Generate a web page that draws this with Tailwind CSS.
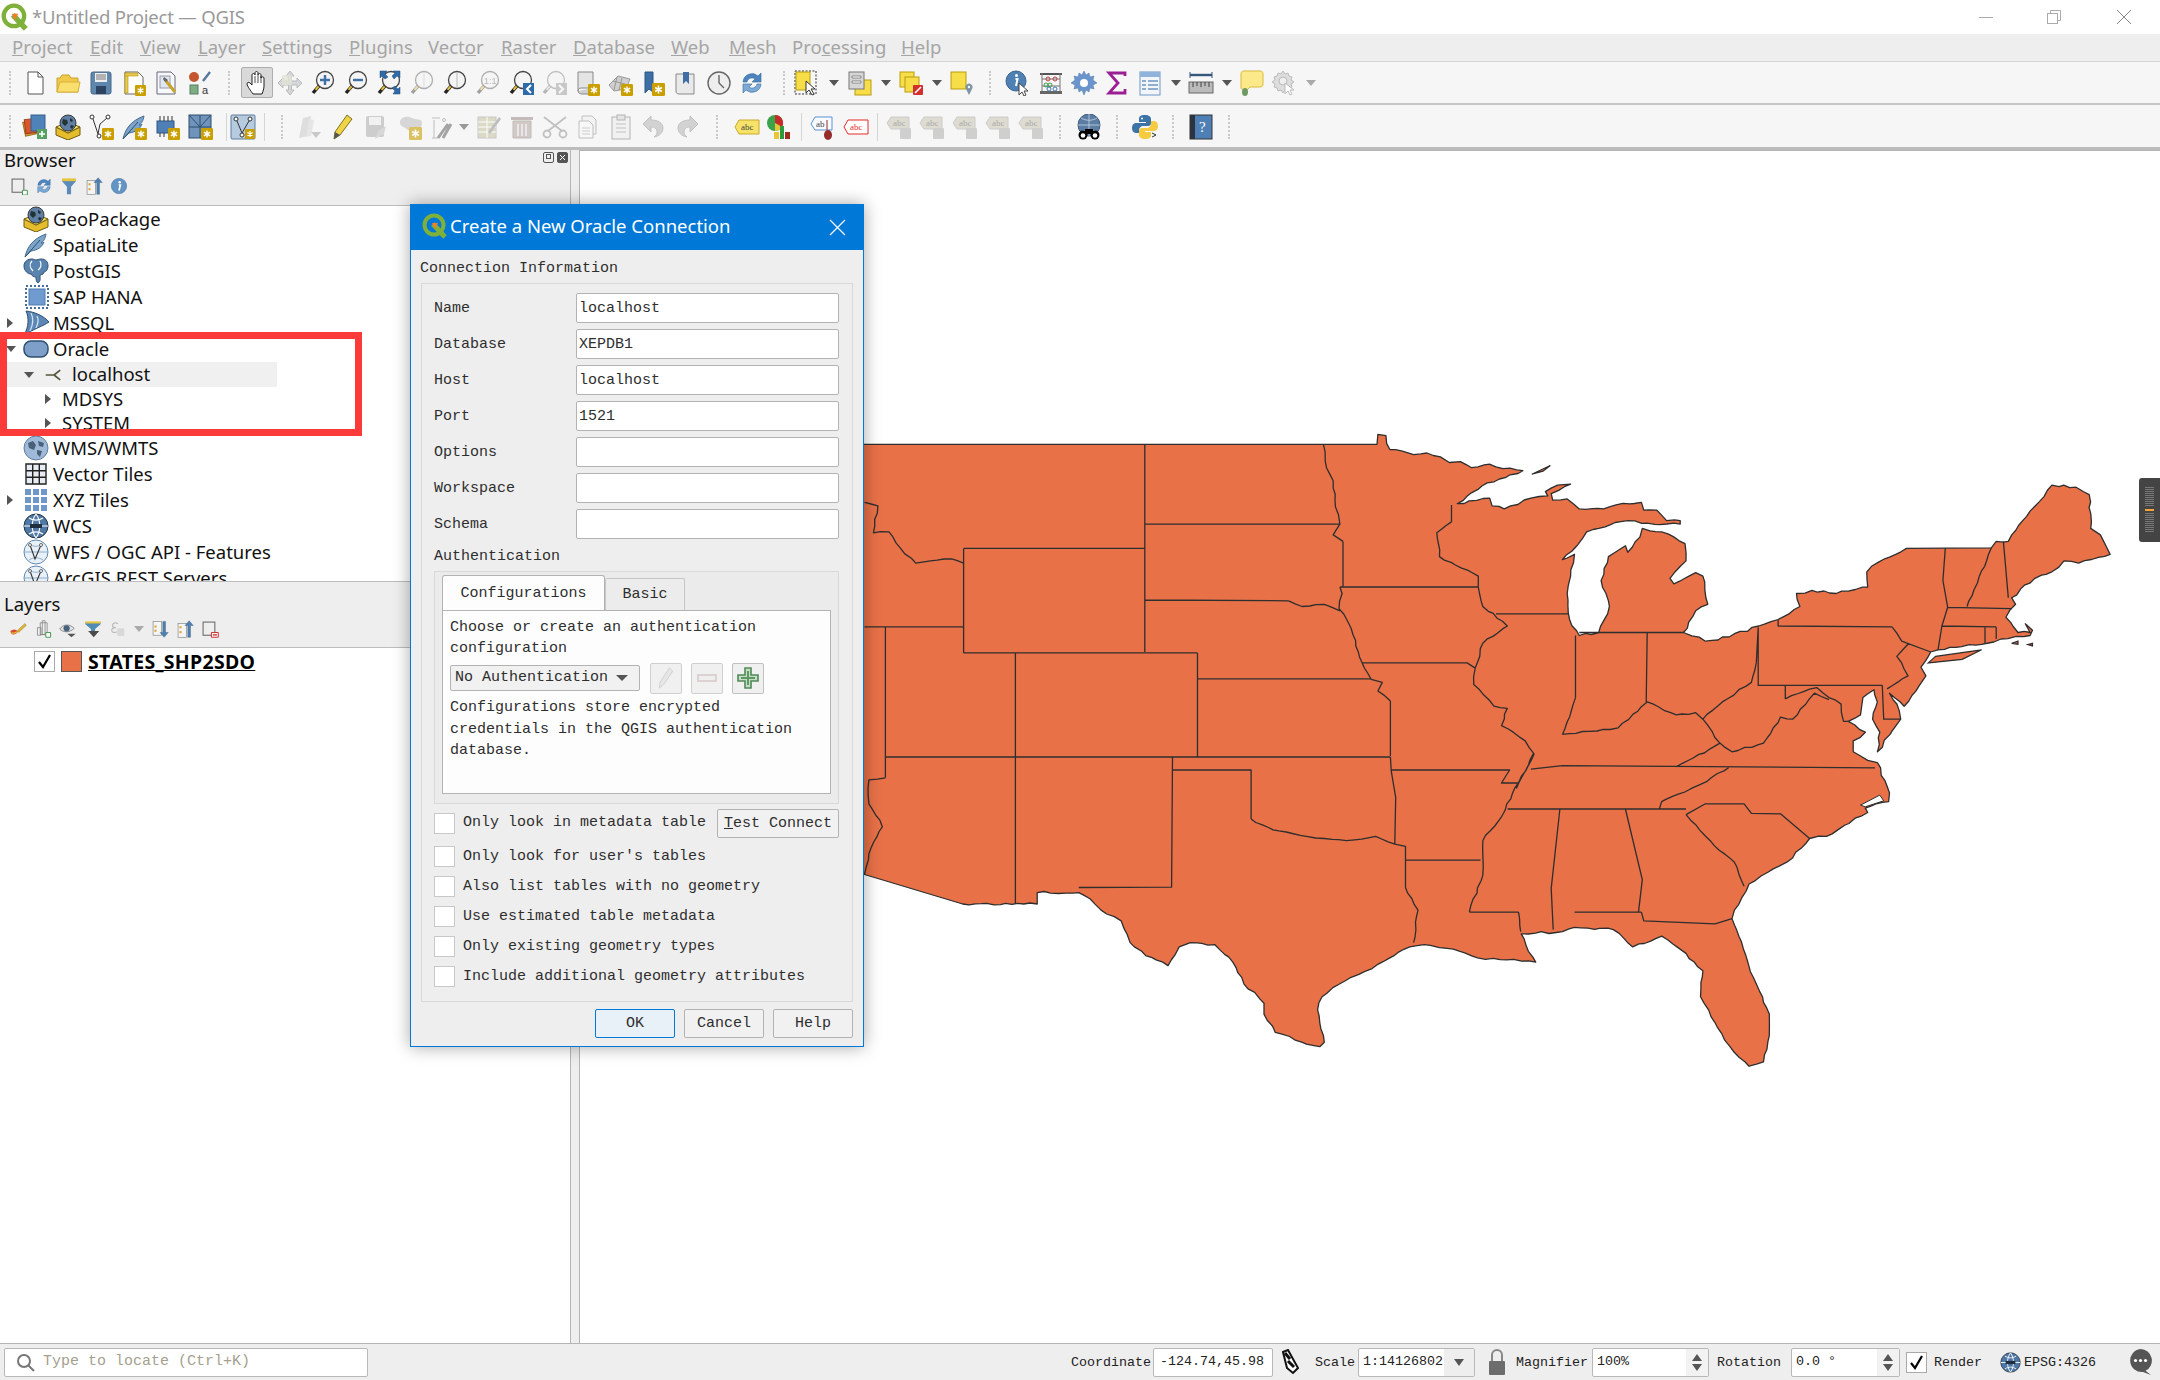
<!DOCTYPE html>
<html lang="en">
<head>
<meta charset="UTF-8" />
<title>QGIS - Create a New Oracle Connection</title>
<script src="https://cdn.jsdelivr.net/npm/@tailwindcss/browser@4"></script>
</head>
<body class="bg-white font-['Noto_Sans',sans-serif]">
<!-- icon sheet -->
<svg class="absolute w-0 h-0" aria-hidden="true">
  <symbol id="badge" viewBox="0 0 10 10"><rect width="10" height="10" rx="1" fill="#c9a000"/><path d="M5 2v6M2.4 3.5l5.2 3M2.4 6.5l5.2-3" stroke="#fff" stroke-width="1.2"/></symbol>
  <symbol id="mag" viewBox="0 0 26 26"><circle cx="15" cy="10" r="8.5" fill="#f4f4f4" stroke="#444" stroke-width="1.3"/><path d="M9 16l-6 7" stroke="#222" stroke-width="3.4"/><path d="M8.6 16.4l-3 3.4" stroke="#e8c23a" stroke-width="2"/></symbol>
  <symbol id="new" viewBox="0 0 26 26"><path d="M6 2h10l5 5v17H6z" fill="#fff" stroke="#555"/><path d="M16 2v5h5" fill="none" stroke="#555"/></symbol>
  <symbol id="open" viewBox="0 0 26 26"><path d="M2 8h3l2-3h7l2 3h7v14H2z" fill="#f1c94a" stroke="#c9a22c"/><path d="M2 22l3-10h20l-2 10z" fill="#fbdf6e" stroke="#d6b03a"/></symbol>
  <symbol id="save" viewBox="0 0 26 26"><rect x="3" y="2" width="20" height="22" rx="2" fill="#5f86ad" stroke="#49688a"/><rect x="7" y="3" width="12" height="9" fill="#eee"/><path d="M8 5h10M8 7h10M8 9h10" stroke="#777"/><rect x="8" y="16" width="10" height="8" fill="#2d4460"/></symbol>
  <symbol id="layout" viewBox="0 0 26 26"><path d="M4 2h13l5 5v17H4z" fill="#fff" stroke="#666"/><rect x="4" y="3" width="3" height="20" fill="#e9c94a" stroke="#b59412" stroke-width=".6"/><rect x="4" y="3" width="13" height="3" fill="#e9c94a" stroke="#b59412" stroke-width=".6"/><use href="#badge" x="14" y="15" width="11" height="11"/></symbol>
  <symbol id="layoutm" viewBox="0 0 26 26"><path d="M3 2h14l4 4v18H3z" fill="#f6f8fc" stroke="#667"/><rect x="6" y="6" width="10" height="12" fill="#dfe7f3" stroke="#99a"/><path d="M12 11l9 11" stroke="#c8a32a" stroke-width="3"/><path d="M10 7a3 3 0 0 0 2 5l2-2z" fill="#666"/></symbol>
  <symbol id="style" viewBox="0 0 26 26"><circle cx="7" cy="7" r="5" fill="#c4552f"/><rect x="3" y="15" width="8" height="9" fill="#7fae85" stroke="#5a7d60"/><path d="M16 11l7-9" stroke="#5577a0" stroke-width="2.4"/></symbol>
  <symbol id="hand" viewBox="0 0 26 26"><path d="M9 24c-2-3-6-8-6-10s2-2 3-1l2 2V5c0-2 3-2 3 0V3c0-2 3-2 3 0v2c0-2 3-2 3 0v3c0-1.500 3-1.500 3 0v8c0 3-1 5-2 8z" fill="#fff" stroke="#222"/><path d="M11 6v7M14 5v8M17 6v7" stroke="#222" stroke-width=".8"/></symbol>
  <symbol id="pansel" viewBox="0 0 26 26"><path d="M13 1l4 5h-2.500v5H20V8l5 5-5 5v-3h-5.500v5H17l-4 5-4-5h2.500v-5H6v3l-5-5 5-5v3h5.500V6H9z" fill="#d3d6da" stroke="#bbb"/><rect x="5" y="5" width="10" height="10" fill="#e3e3d5" opacity=".8"/></symbol>
  <symbol id="zoomin" viewBox="0 0 26 26"><use href="#mag" width="26" height="26"/><path d="M15 5v10M10 10h10" stroke="#3f6fa5" stroke-width="2.400"/></symbol>
  <symbol id="zoomout" viewBox="0 0 26 26"><use href="#mag" width="26" height="26"/><path d="M10 10h10" stroke="#3f6fa5" stroke-width="2.400"/></symbol>
  <symbol id="zoomfull" viewBox="0 0 26 26"><use href="#mag" width="26" height="26"/><path d="M4 1h7l-2 3 3 3-3 2-3-3-2 2zM24 1v7l-3-2-3 3-2-3 3-3-2-2zM24 24h-7l2-3-3-3 3-2 3 3 2-2z" fill="#2f6aa8" stroke="#274f7a" stroke-width=".5"/></symbol>
  <symbol id="zoomlayer" viewBox="0 0 26 26"><use href="#mag" width="26" height="26"/><path d="M15 2v16" stroke="#bbb"/></symbol>
  <symbol id="zoomlast" viewBox="0 0 26 26"><use href="#mag" width="26" height="26"/><rect x="15" y="13" width="11" height="12" fill="#2f6aa8"/><path d="M23 15l-4 4 4 4" fill="none" stroke="#fff" stroke-width="2"/></symbol>
  <symbol id="zoomnext" viewBox="0 0 26 26"><use href="#mag" width="26" height="26"/><rect x="15" y="13" width="11" height="12" fill="#2f6aa8"/><path d="M18 15l4 4-4 4" fill="none" stroke="#fff" stroke-width="2"/></symbol>
  <symbol id="bookscroll" viewBox="0 0 26 26"><path d="M4 2h15v16H7c-2 0-3 2-3 3z" fill="#e4e4e4" stroke="#888"/><path d="M4 21c0 2 2 3 4 3h11v-6" fill="#cfcfcf" stroke="#888"/><use href="#badge" x="14" y="14" width="12" height="12"/></symbol>
  <symbol id="mapbadge" viewBox="0 0 26 26"><path d="M2 15l9-9 12 3-4 10-12 2z" fill="#cfcfcf" stroke="#999"/><path d="M6 11l12 3M10 7l-3 13M15 8l-3 12" stroke="#999"/><use href="#badge" x="14" y="14" width="12" height="12"/></symbol>
  <symbol id="bookmark" viewBox="0 0 26 26"><path d="M5 2h8v20l-4-3-4 4z" fill="#3d6fa6" stroke="#2c5480"/><use href="#badge" x="12" y="13" width="13" height="13"/></symbol>
  <symbol id="bookmark2" viewBox="0 0 26 26"><path d="M3 4h18v20H6c-2 0-3-1-3-3z" fill="#e9e9e9" stroke="#888"/><path d="M10 2h6v12l-3-3-3 3z" fill="#3d6fa6"/></symbol>
  <symbol id="clock" viewBox="0 0 26 26"><circle cx="13" cy="13" r="11" fill="#eee" stroke="#666" stroke-width="1.400"/><path d="M13 5v8l5 5" fill="none" stroke="#666" stroke-width="1.400"/></symbol>
  <symbol id="refresh" viewBox="0 0 26 26"><path d="M4 12a9 9 0 0 1 15-6l3-3v9h-9l3-3a5 5 0 0 0-8 3z" fill="#4d86bf" stroke="#35689c" stroke-width=".6"/><path d="M22 14a9 9 0 0 1-15 6l-3 3v-9h9l-3 3a5 5 0 0 0 8-3z" fill="#7caad6" stroke="#35689c" stroke-width=".6"/></symbol>
  <symbol id="select" viewBox="0 0 26 26"><rect x="1" y="1" width="21" height="23" fill="none" stroke="#333" stroke-dasharray="2 1.500"/><rect x="2" y="2" width="14" height="18" fill="#f7dd47" stroke="#b99d10"/><path d="M12 11v12l3-3 3 5 2-1-3-5h4z" fill="#fff" stroke="#333"/></symbol>
  <symbol id="selform" viewBox="0 0 26 26"><rect x="8" y="10" width="16" height="15" fill="#f7dd47" stroke="#b99d10"/><rect x="2" y="2" width="15" height="17" fill="#d6d6d6" stroke="#777"/><path d="M5 7h9M5 12h9" stroke="#fff" stroke-width="2"/><path d="M5 6h9v2H5zM5 11h9v2H5z" fill="none" stroke="#666" stroke-width=".7"/></symbol>
  <symbol id="deselect" viewBox="0 0 26 26"><rect x="2" y="2" width="14" height="15" fill="#f7dd47" stroke="#b99d10"/><rect x="7" y="7" width="14" height="15" fill="#f7dd47" stroke="#b99d10"/><rect x="15" y="15" width="10" height="10" rx="1" fill="#d32f2f"/><path d="M17 23l6-6" stroke="#fff" stroke-width="1.600"/></symbol>
  <symbol id="selpin" viewBox="0 0 26 26"><rect x="2" y="2" width="15" height="17" fill="#f7dd47" stroke="#b99d10"/><path d="M20 25l-3-6a3.500 3.500 0 1 1 6 0z" fill="#7d95a5"/><circle cx="20" cy="17" r="1.200" fill="#fff"/></symbol>
  <symbol id="identify" viewBox="0 0 26 26"><circle cx="11" cy="11" r="10" fill="#4f80b4" stroke="#3b648f"/><circle cx="11.500" cy="5.500" r="1.500" fill="#fff"/><path d="M10.500 9h2l-1.500 7" fill="none" stroke="#fff" stroke-width="2"/><path d="M14 13v12l3-3 2 4 2-1-2-4h4z" fill="#fff" stroke="#444"/></symbol>
  <symbol id="abacus" viewBox="0 0 26 26"><rect x="2" y="3" width="22" height="2" fill="#555"/><rect x="2" y="21" width="22" height="3" fill="#666"/><path d="M4 3v18M22 3v18M4 9h18M4 16h18" stroke="#777"/><circle cx="10" cy="9" r="2" fill="none" stroke="#c43c3c"/><circle cx="17" cy="9" r="2" fill="none" stroke="#c43c3c"/><circle cx="8" cy="15" r="2" fill="none" stroke="#3c9a4c"/><circle cx="12" cy="15" r="2" fill="none" stroke="#3c9a4c"/><circle cx="11" cy="19" r="2" fill="none" stroke="#3c76b4"/><circle cx="17" cy="19" r="2" fill="none" stroke="#3c76b4"/></symbol>
  <symbol id="gear" viewBox="0 0 26 26"><path d="M13 1l2 4 3-2 1 4 4-1-1 4 4 3-4 2 1 4-4-1-1 4-3-2-2 5-2-5-3 2-1-4-4 1 1-4-4-2 4-3-1-4 4 1 1-4 3 2z" fill="#6a95cc" stroke="#5078a8" stroke-width=".5"/><circle cx="13" cy="13" r="4" fill="#fff"/></symbol>
  <symbol id="sigma" viewBox="0 0 26 26"><path d="M21 6V3H5l9 10-9 10h16v-4" fill="none" stroke="#9b1f94" stroke-width="2.800"/></symbol>
  <symbol id="table" viewBox="0 0 26 26"><rect x="3" y="2" width="20" height="23" fill="#f2f6fb" stroke="#6c95c4"/><rect x="3" y="2" width="20" height="5" fill="#8fb3da"/><path d="M5 11h4M11 11h10M5 15h4M11 15h10M5 19h4M11 19h10" stroke="#6c95c4" stroke-width="1.600"/></symbol>
  <symbol id="ruler" viewBox="0 0 26 26"><path d="M2 5h22" stroke="#34557c" stroke-width="2.400"/><path d="M2 2v6M24 2v6" stroke="#34557c"/><rect x="1" y="12" width="24" height="11" fill="#bbb" stroke="#666"/><path d="M5 12v5M9 12v4M13 12v5M17 12v4M21 12v5" stroke="#444"/></symbol>
  <symbol id="tip" viewBox="0 0 26 26"><path d="M5 1h16c2 0 3 1 3 3v10c0 2-1 3-3 3H11l-3 3H5c-2 0-3-1-3-3V4c0-2 1-3 3-3z" fill="#fbe98a" stroke="#d9b93c"/><ellipse cx="6" cy="22" rx="3" ry="4" fill="#6f9a62"/></symbol>
  <symbol id="action" viewBox="0 0 26 26"><path d="M11 1l2 3 3-1 1 3 3 1-1 3 3 2-3 2 1 3-3 1-1 3-3-1-2 3-2-3-3 1-1-3-3-1 1-3-3-2 3-2-1-3 3-1 1-3 3 1z" fill="#ddd" stroke="#bbb"/><circle cx="11" cy="11" r="4" fill="#eee" stroke="#bbb"/><path d="M13 13v11l3-3 2 4 2-1-2-4h4z" fill="#fff" stroke="#bbb"/></symbol>
  <symbol id="dsm" viewBox="0 0 26 26"><rect x="2" y="7" width="13" height="14" fill="#d8a13a" stroke="#9a6f1b" transform="rotate(-12 8 14)"/><rect x="3" y="5" width="13" height="14" fill="#d9562b" stroke="#a23c19" transform="rotate(-6 9 12)"/><rect x="9" y="1" width="14" height="16" fill="#4f82b8" stroke="#365f8b"/><rect x="15" y="15" width="10" height="10" fill="#59a064"/><path d="M20 17v6M17 20h6" stroke="#fff" stroke-width="1.600"/></symbol>
  <symbol id="gpkg" viewBox="0 0 26 26"><path d="M1 13l12 6 12-6v8l-12 5-12-5z" fill="#e5bd2c" stroke="#6d5b14"/><path d="M1 13l12-5 12 5-12 6z" fill="#f7dd62" stroke="#6d5b14"/><circle cx="13" cy="9" r="8" fill="#5f7fa6" stroke="#3a3a3a"/><path d="M8 5l4 1 1 3-3 3-3-3zM15 4l3 2-1 2-2-1zM16 11l3 1-2 3-2-2z" fill="#233"/></symbol>
  <symbol id="newvec" viewBox="0 0 26 26"><circle cx="4" cy="3" r="2" fill="#fff" stroke="#333"/><circle cx="20" cy="3" r="2" fill="#fff" stroke="#333"/><circle cx="11" cy="22" r="2" fill="#fff" stroke="#333"/><path d="M5 5l5 15 2-10 7-6" fill="none" stroke="#333"/><use href="#badge" x="14" y="14" width="12" height="12"/></symbol>
  <symbol id="feather" viewBox="0 0 26 26"><path d="M2 25c2-9 7-18 21-23-1 5-2 7-5 9 1 0 2 0 3-1-2 5-6 8-13 9z" fill="#7da4c9" stroke="#436b93"/><path d="M2 25L17 8" stroke="#2f506f"/></symbol>
  <symbol id="featherb" viewBox="0 0 26 26"><use href="#feather" width="26" height="26"/><use href="#badge" x="14" y="14" width="12" height="12"/></symbol>
  <symbol id="chip" viewBox="0 0 26 26"><rect x="3" y="7" width="17" height="12" fill="#4f7fb5" stroke="#2f5884"/><path d="M6 2v5M10 2v5M14 2v5M18 2v5M6 19v4M10 19v4" stroke="#333"/><use href="#badge" x="14" y="14" width="12" height="12"/></symbol>
  <symbol id="meshb" viewBox="0 0 26 26"><rect x="2" y="1" width="22" height="23" fill="#6f93bb" stroke="#2f4d6f"/><path d="M2 13h22M13 1v23M2 1l11 12M13 13L24 1" stroke="#2f4d6f"/><use href="#badge" x="14" y="14" width="12" height="12"/></symbol>
  <symbol id="vedit" viewBox="0 0 26 26"><rect x="1" y="1" width="24" height="24" rx="1" fill="#b7cbe0" stroke="#5f7f9f"/><circle cx="6" cy="5" r="2" fill="#fff" stroke="#333"/><circle cx="20" cy="5" r="2" fill="#fff" stroke="#333"/><circle cx="12" cy="21" r="2" fill="#fff" stroke="#333"/><path d="M7 7l5 12 7-12" fill="none" stroke="#333"/><use href="#badge" x="15" y="15" width="10" height="10"/></symbol>
  <symbol id="pencils" viewBox="0 0 26 26"><path d="M2 24L6 4l8-2-3 20z" fill="#bbb"/><path d="M9 23l3-18 5 1-3 16z" fill="#ccc"/><path d="M14 18h10l-5 6z" fill="#888"/></symbol>
  <symbol id="pencil" viewBox="0 0 26 26"><path d="M4 25l1-7L17 1l5 4-12 16z" fill="#f0d445" stroke="#7b7120"/><path d="M4 25l1-7 5 3z" fill="#555"/></symbol>
  <symbol id="savee" viewBox="0 0 26 26"><rect x="3" y="2" width="18" height="21" rx="2" fill="#a5a5a5"/><rect x="6" y="3" width="12" height="8" fill="#eee"/><path d="M12 25l3-8 8-5-2 8z" fill="#bbb"/></symbol>
  <symbol id="blobb" viewBox="0 0 26 26"><path d="M2 7c2-5 8-5 12-3s10 0 10 5-5 8-8 9-7-3-9-4-6-3-5-7z" fill="#c2c2c2"/><use href="#badge" x="11" y="13" width="13" height="13"/></symbol>
  <symbol id="vtools" viewBox="0 0 26 26"><path d="M3 4h8M5 6v18M3 24h6" stroke="#888" fill="none"/><path d="M9 24l10-14M22 10l-8 14" stroke="#555" stroke-width="3"/><circle cx="15" cy="6" r="1.500" fill="none" stroke="#888"/></symbol>
  <symbol id="tedit" viewBox="0 0 26 26"><rect x="2" y="3" width="18" height="21" fill="#c9c9a8" stroke="#aaa"/><path d="M2 8h18M2 13h18M2 18h18M11 3v21" stroke="#fff"/><path d="M12 18L23 3l2 2-11 15z" fill="#999"/></symbol>
  <symbol id="trash" viewBox="0 0 26 26"><rect x="2" y="3" width="22" height="3" fill="#a79595"/><path d="M4 7h18v17H4z" fill="#bcaaaa" stroke="#998"/><path d="M9 10v12M13 10v12M17 10v12" stroke="#eee" stroke-width="1.500"/></symbol>
  <symbol id="cut" viewBox="0 0 26 26"><path d="M2 3l18 14M24 3L6 17" stroke="#aaa" stroke-width="1.800"/><circle cx="5" cy="20" r="3.500" fill="none" stroke="#aaa" stroke-width="1.800"/><circle cx="21" cy="20" r="3.500" fill="none" stroke="#aaa" stroke-width="1.800"/></symbol>
  <symbol id="copy" viewBox="0 0 26 26"><path d="M7 2h10l4 4v14H7z" fill="#f2f2f2" stroke="#aaa"/><path d="M4 7h10l4 4v13H4z" fill="#f8f8f8" stroke="#aaa"/><path d="M7 14h8M7 17h8M7 20h8" stroke="#bbb"/></symbol>
  <symbol id="paste" viewBox="0 0 26 26"><rect x="4" y="3" width="18" height="22" fill="#f0f0f0" stroke="#999"/><rect x="9" y="1" width="8" height="5" fill="#ddd" stroke="#999"/><path d="M8 10h10M8 14h10M8 18h10" stroke="#aaa"/></symbol>
  <symbol id="undo" viewBox="0 0 26 26"><path d="M10 2L2 10l8 8v-5c4 0 6 2 6 5 0 2-1 3-3 5 6-1 9-5 9-9 0-5-5-8-12-8z" fill="#c4c4c4" stroke="#aaa"/></symbol>
  <symbol id="redo" viewBox="0 0 26 26"><path d="M16 2l8 8-8 8v-5c-4 0-6 2-6 5 0 2 1 3 3 5-6-1-9-5-9-9 0-5 5-8 12-8z" fill="#c4c4c4" stroke="#aaa"/></symbol>
  <symbol id="tag" viewBox="0 0 26 26"><path d="M5 6h20v14H5l-4-7z" fill="#f7e36a" stroke="#c9a92a"/></symbol>
  <symbol id="diagram" viewBox="0 0 26 26"><circle cx="8" cy="9" r="8" fill="#3aa34a"/><path d="M8 9V1a8 8 0 0 1 7 12z" fill="#c82a2a"/><path d="M8 9l7 4a8 8 0 0 1-7 4z" fill="#e8c636"/><rect x="7" y="18" width="5" height="7" fill="#e8c636"/><rect x="13" y="12" width="4" height="13" fill="#2d9a3e"/><rect x="18" y="18" width="5" height="7" fill="#a02a20"/></symbol>
  <symbol id="tagpin" viewBox="0 0 26 26"><path d="M5 3h17v13H5l-4-6z" fill="#f7fbff" stroke="#5c93cf"/><path d="M17 6v10" stroke="#9a2b2b"/><ellipse cx="18" cy="21" rx="4" ry="5" fill="#962b2b"/></symbol>
  <symbol id="tagred" viewBox="0 0 26 26"><path d="M5 6h20v14H5l-4-7z" fill="#fff" stroke="#e62b2b"/></symbol>
  <symbol id="taggray" viewBox="0 0 26 26"><path d="M5 3h18v12H5l-4-6z" fill="#dedbd0" stroke="#ccc"/><rect x="14" y="14" width="11" height="11" rx="1" fill="#cfcfcf"/></symbol>
  <symbol id="globebin" viewBox="0 0 26 26"><circle cx="13" cy="11" r="11" fill="#5c7da3" stroke="#3d5b7c"/><path d="M2 11h22M13 0v22M5 4c5 3 11 3 16 0M5 18c5-3 11-3 16 0" stroke="#c8d4e2" fill="none" stroke-width=".8"/><circle cx="7" cy="21" r="4.500" fill="#000"/><circle cx="19" cy="21" r="4.500" fill="#000"/><circle cx="7" cy="21.500" r="2.300" fill="#fff"/><circle cx="19" cy="21.500" r="2.300" fill="#fff"/><rect x="9" y="15" width="8" height="5" fill="#000"/></symbol>
  <symbol id="python" viewBox="0 0 26 26"><path d="M13 1c-5 0-6 2-6 4v3h7v1H4c-3 0-4 3-4 5s1 5 4 5h3v-3c0-2 2-4 4-4h5c2 0 3-1 3-3V5c0-2-2-4-6-4z" fill="#3d74a8"/><path d="M13 25c5 0 6-2 6-4v-3h-6v-1h9c3 0 4-3 4-5s-1-5-4-5h-3v3c0 2-2 4-4 4h-5c-2 0-3 1-3 3v4c0 2 2 4 6 4z" fill="#f6cb3f"/><circle cx="10" cy="4.500" r="1" fill="#fff"/><path d="M20 19l4 2-4 2" fill="none" stroke="#333"/></symbol>
  <symbol id="help" viewBox="0 0 26 26"><rect x="2" y="1" width="22" height="24" fill="#4f80b5" stroke="#333"/><rect x="2" y="1" width="5" height="24" fill="#2c3440"/></symbol>
  <symbol id="add" viewBox="0 0 26 26"><rect x="3" y="3" width="17" height="19" fill="none" stroke="#666" stroke-width="1.500"/><rect x="18" y="19" width="7" height="7" rx="1" fill="#fff" stroke="#4b9a56" stroke-width="1.500"/></symbol>
  <symbol id="funnel" viewBox="0 0 26 26"><path d="M3 3h20v3l-7 8v11h-6V14L3 6z" fill="#5d8bb9"/><path d="M3 2h20v4H3z" fill="#e6c63d"/></symbol>
  <symbol id="collapse" viewBox="0 0 26 26"><rect x="3" y="5" width="12" height="20" fill="#f5f5f5" stroke="#888"/><rect x="5" y="9" width="3" height="3" fill="#e3a32c"/><rect x="5" y="16" width="3" height="3" fill="#e3a32c"/><path d="M17 25V8h-4l6-7 6 7h-4v17z" fill="#4f7fb0" stroke="#33597f" stroke-width=".5"/></symbol>
  <symbol id="expand" viewBox="0 0 26 26"><rect x="3" y="2" width="12" height="20" fill="#f5f5f5" stroke="#888"/><rect x="5" y="8" width="3" height="3" fill="#e3a32c"/><rect x="5" y="14" width="3" height="3" fill="#e3a32c"/><path d="M17 2v16h-4l6 7 6-7h-4V2z" fill="#4f7fb0" stroke="#33597f" stroke-width=".5"/></symbol>
  <symbol id="info" viewBox="0 0 26 26"><circle cx="13" cy="13" r="11" fill="#6494c4" stroke="#4f7eae"/><circle cx="14" cy="7.500" r="1.800" fill="#fff"/><path d="M12.500 11.500h2.500l-2 8" fill="none" stroke="#fff" stroke-width="2.400"/></symbol>
  <symbol id="brush" viewBox="0 0 26 26"><path d="M2 16c4-3 8-3 11 1-3 4-7 5-10 3z" fill="#d94a2a"/><path d="M3 19c3 0 6 0 9-2" stroke="#e8c23a" stroke-width="2"/><path d="M12 15L23 5l2 3-11 10z" fill="#d9b43a" stroke="#8a7220" stroke-width=".5"/></symbol>
  <symbol id="addgroup" viewBox="0 0 26 26"><path d="M9 4h10v17H9z" fill="#eee" stroke="#777"/><path d="M12 1h4v20h-4zM5 11h5v11H5z" fill="none" stroke="#777"/><rect x="17" y="18" width="7" height="7" rx="1" fill="#fff" stroke="#4b9a56" stroke-width="1.500"/></symbol>
  <symbol id="eye" viewBox="0 0 26 26"><path d="M1 13c5-7 14-8 21-1-6 6-15 7-21 1z" fill="#e4e4e4" stroke="#666"/><circle cx="11" cy="12" r="4.500" fill="#46627f"/><path d="M12 20h12l-6 5z" fill="#555"/></symbol>
  <symbol id="filtr" viewBox="0 0 26 26"><path d="M2 3h22v3l-8 7v5H10v-5L2 6z" fill="#4f8cb5"/><path d="M2 2h22v3H2z" fill="#e6c63d"/><path d="M6 16h16l-8 9z" fill="#4a4a4a"/></symbol>
  <symbol id="eps" viewBox="0 0 26 26"><path d="M13 5c-5-2-8 0-8 3s3 3 5 3c-3 0-6 1-6 4s4 4 8 2" fill="none" stroke="#bbb" stroke-width="1.600"/><rect x="12" y="12" width="10" height="11" fill="#d8d8d8"/></symbol>
  <symbol id="removeg" viewBox="0 0 26 26"><rect x="3" y="3" width="17" height="19" fill="none" stroke="#666" stroke-width="1.500"/><rect x="15" y="18" width="10" height="7" rx="1" fill="#fff" stroke="#cc3333" stroke-width="1.500"/><path d="M17 21.500h6" stroke="#cc3333" stroke-width="2"/></symbol>
  <symbol id="qlogo" viewBox="0 0 26 26"><circle cx="12" cy="12" r="9.500" fill="none" stroke="#7fb03a" stroke-width="4"/><path d="M11 11l12 13" stroke="#7fb03a" stroke-width="5"/><path d="M10 10h6l-3 6z" fill="#ee7e2a"/></symbol>
  <symbol id="pg" viewBox="0 0 26 26"><path d="M1 8c0-5 4-7 8-7 2 0 3 1 4 1s3-1 5-1c5 0 7 3 7 7 0 3-2 6-4 6l-1 2c-1 1-3 0-3 2 0 2 1 5-2 7-2-1-2-4-2-6-2 0-4-1-5-3-3 0-7-3-7-8z" fill="#5a84b0" stroke="#2f4f6f"/><path d="M9 3c-3 3-2 7 1 10M17 3c2 3 1 7-2 9" fill="none" stroke="#fff" stroke-width="1.200"/></symbol>
  <symbol id="hana" viewBox="0 0 26 26"><rect x="6" y="5" width="16" height="16" fill="#6f9bd0" stroke="#4f7cb0"/><rect x="3" y="2" width="22" height="22" fill="none" stroke="#476d9a" stroke-width="2" stroke-dasharray="2 2"/></symbol>
  <symbol id="mssql" viewBox="0 0 26 26"><path d="M1 25c5-8 5-18 2-24 9 1 18 5 23 11-6 4-15 7-25 13z" fill="#5b87b7" stroke="#2f4f6f"/><path d="M8 3c3 6 2 12-1 18M14 6c2 4 1 8-1 12" fill="none" stroke="#d6e2ef" stroke-width="1.200"/></symbol>
  <symbol id="oracle" viewBox="0 0 26 26"><rect x="1" y="5" width="24" height="16" rx="7" fill="#7d9fc9" stroke="#2f4f6f" stroke-width="1.500"/></symbol>
  <symbol id="conn" viewBox="0 0 26 26"><path d="M1 13h12M13 13l9-7M13 13l9 7" fill="none" stroke="#56563a" stroke-width="2.400"/></symbol>
  <symbol id="wms" viewBox="0 0 26 26"><circle cx="13" cy="13" r="12" fill="#9fb9d8" stroke="#5f7f9f"/><path d="M5 8l5-2 3 4-2 5-5-2zM15 6l6 2-1 4-4-1zM14 15l5 1-2 6-3-3z" fill="#4a5f78"/></symbol>
  <symbol id="vtiles" viewBox="0 0 26 26"><path d="M3 3h20v20H3z" fill="#e7ecf2" stroke="#222" stroke-width="1.400"/><path d="M3 9.700h20M3 16.300h20M9.700 3v20M16.300 3v20" stroke="#222" stroke-width="1.400"/></symbol>
  <symbol id="xyz" viewBox="0 0 26 26"><path d="M2 2h6v6H2zM10 2h6v6h-6zM18 2h6v6h-6zM2 10h6v6H2zM10 10h6v6h-6zM18 10h6v6h-6zM2 18h6v6H2zM10 18h6v6h-6zM18 18h6v6h-6z" fill="#6f97c9"/></symbol>
  <symbol id="wcs" viewBox="0 0 26 26"><circle cx="13" cy="13" r="12" fill="#4f78a6" stroke="#1f2f3f"/><path d="M1 13h24M6 5c5 3 9 3 14 0M6 21c5-3 9-3 14 0M13 1c-5 7-5 17 0 24M13 1c5 7 5 17 0 24" fill="none" stroke="#fff" stroke-width="1.100"/><rect x="7" y="11" width="12" height="4" fill="#1f2f3f"/></symbol>
  <symbol id="wfs" viewBox="0 0 26 26"><circle cx="13" cy="13" r="12" fill="#e8f0f8" stroke="#5f87af"/><path d="M1 13h24M6 5c5 3 9 3 14 0M6 21c5-3 9-3 14 0" fill="none" stroke="#88a8c8" stroke-width=".9"/><path d="M7 6l5 14 6-14" fill="none" stroke="#333" stroke-width="1.100"/><circle cx="7" cy="6" r="1.500" fill="#fff" stroke="#333" stroke-width=".7"/><circle cx="18" cy="6" r="1.500" fill="#fff" stroke="#333" stroke-width=".7"/></symbol>
</svg>

<div class="relative w-[2160px] h-[1380px] overflow-hidden flex flex-col">
  <!-- title bar -->
  <div class="h-[34px] flex items-center bg-white text-[#a2a2a2]">
    <svg class="ml-[1px] w-[28px] h-[28px]"><use href="#qlogo"/></svg>
    <span class="ml-[3px] text-[18.500px] text-[#999] tracking-[-0.2px]">*Untitled Project — QGIS</span>
    <div class="ml-auto flex items-center">
      <span class="w-[68px] flex justify-center"><span class="block w-[14px] h-px bg-[#aaa]"></span></span>
      <span class="w-[68px] flex justify-center"><svg class="w-[16px] h-[16px]" viewBox="0 0 16 16" fill="none" stroke="#aaa"><rect x="1.500" y="4.500" width="10" height="10"/><path d="M4.500 4V1.500h10v10H12"/></svg></span>
      <span class="w-[72px] flex justify-center"><svg class="w-[18px] h-[18px]" viewBox="0 0 18 18" stroke="#888"><path d="M2 2l14 14M16 2L2 16"/></svg></span>
    </div>
  </div>
  <!-- menu -->
  <div class="h-[28px] flex items-center pl-[12px] bg-[#eeeeee] border-b border-[#d4d4d4] text-[18.500px] text-[#a5a5a5] leading-none">
    <span class="w-[78px]"><u>P</u>roject</span><span class="w-[50px]"><u>E</u>dit</span><span class="w-[58px]"><u>V</u>iew</span><span class="w-[64px]"><u>L</u>ayer</span><span class="w-[87px]"><u>S</u>ettings</span><span class="w-[79px]"><u>P</u>lugins</span><span class="w-[73px]">Vect<u>o</u>r</span><span class="w-[72px]"><u>R</u>aster</span><span class="w-[98px]"><u>D</u>atabase</span><span class="w-[58px]"><u>W</u>eb</span><span class="w-[63px]"><u>M</u>esh</span><span class="w-[109px]">Pro<u>c</u>essing</span><span><u>H</u>elp</span>
  </div>
  <!-- toolbar 1 -->
  <div class="h-[43px] flex items-center pl-[9px] bg-[#f6f6f6] border-b-2 border-[#c6c6c6]">
    <span class="h-[24px] w-[3px] mr-[6.500px] border-l-2 border-dotted border-[#c9c9c9]"></span>
    <span class="w-[33px] flex justify-center"><svg class="w-[26px] h-[26px]"><use href="#new"/></svg></span>
    <span class="w-[33px] flex justify-center"><svg class="w-[26px] h-[26px]"><use href="#open"/></svg></span>
    <span class="w-[33px] flex justify-center"><svg class="w-[26px] h-[26px]"><use href="#save"/></svg></span>
    <span class="w-[33px] flex justify-center"><svg class="w-[26px] h-[26px]"><use href="#layout"/></svg></span>
    <span class="w-[33px] flex justify-center"><svg class="w-[26px] h-[26px]"><use href="#layoutm"/></svg></span>
    <span class="w-[33px] flex justify-center"><svg class="w-[26px] h-[26px]" viewBox="0 0 26 26"><use href="#style"/><text x="15" y="24" font-size="11" font-family="Liberation Sans" fill="#333">a</text></svg></span>
    <span class="w-[24px] flex justify-center"><span class="h-[24px] w-[2px] border-l-2 border-dotted border-[#c9c9c9]"></span></span>
    <span class="w-[33px] flex justify-center"><span class="w-[32px] h-[31px] flex items-center justify-center bg-[#d9d9d9] border border-[#adadad] rounded-[2px]"><svg class="w-[26px] h-[26px]"><use href="#hand"/></svg></span></span>
    <span class="w-[33px] flex justify-center"><svg class="w-[26px] h-[26px]"><use href="#pansel"/></svg></span>
    <span class="w-[33px] flex justify-center"><svg class="w-[26px] h-[26px]"><use href="#zoomin"/></svg></span>
    <span class="w-[33px] flex justify-center"><svg class="w-[26px] h-[26px]"><use href="#zoomout"/></svg></span>
    <span class="w-[33px] flex justify-center"><svg class="w-[26px] h-[26px]"><use href="#zoomfull"/></svg></span>
    <span class="w-[33px] flex justify-center opacity-40"><svg class="w-[26px] h-[26px]"><use href="#zoomlayer"/></svg></span>
    <span class="w-[33px] flex justify-center"><svg class="w-[26px] h-[26px]"><use href="#zoomlayer"/></svg></span>
    <span class="w-[33px] flex justify-center opacity-40"><svg class="w-[26px] h-[26px]" viewBox="0 0 26 26"><use href="#mag"/><text x="9" y="14" font-size="9" font-family="Liberation Sans" fill="#555">1:1</text></svg></span>
    <span class="w-[33px] flex justify-center"><svg class="w-[26px] h-[26px]"><use href="#zoomlast"/></svg></span>
    <span class="w-[33px] flex justify-center opacity-30 grayscale"><svg class="w-[26px] h-[26px]"><use href="#zoomnext"/></svg></span>
    <span class="w-[33px] flex justify-center"><svg class="w-[26px] h-[26px]"><use href="#bookscroll"/></svg></span>
    <span class="w-[33px] flex justify-center"><svg class="w-[26px] h-[26px]"><use href="#mapbadge"/></svg></span>
    <span class="w-[33px] flex justify-center"><svg class="w-[26px] h-[26px]"><use href="#bookmark"/></svg></span>
    <span class="w-[33px] flex justify-center"><svg class="w-[26px] h-[26px]"><use href="#bookmark2"/></svg></span>
    <span class="w-[33px] flex justify-center"><svg class="w-[26px] h-[26px]"><use href="#clock"/></svg></span>
    <span class="w-[33px] flex justify-center"><svg class="w-[26px] h-[26px]"><use href="#refresh"/></svg></span>
    <span class="w-[22px] flex justify-center pl-[8px]"><span class="h-[24px] w-[2px] border-l-2 border-dotted border-[#c9c9c9]"></span></span>
    <span class="w-[33px] flex justify-center"><svg class="w-[26px] h-[26px]"><use href="#select"/></svg></span>
    <span class="w-[20px] flex justify-center"><span class="w-0 h-0 border-x-[5px] border-x-transparent border-t-[6px] border-t-[#555]"></span></span>
    <span class="w-[33px] flex justify-center"><svg class="w-[26px] h-[26px]"><use href="#selform"/></svg></span>
    <span class="w-[18px] flex justify-center"><span class="w-0 h-0 border-x-[5px] border-x-transparent border-t-[6px] border-t-[#555]"></span></span>
    <span class="w-[33px] flex justify-center"><svg class="w-[26px] h-[26px]"><use href="#deselect"/></svg></span>
    <span class="w-[18px] flex justify-center"><span class="w-0 h-0 border-x-[5px] border-x-transparent border-t-[6px] border-t-[#555]"></span></span>
    <span class="w-[33px] flex justify-center"><svg class="w-[26px] h-[26px]"><use href="#selpin"/></svg></span>
    <span class="w-[23px] flex justify-center"><span class="h-[24px] w-[2px] border-l-2 border-dotted border-[#c9c9c9]"></span></span>
    <span class="w-[33px] flex justify-center"><svg class="w-[26px] h-[26px]"><use href="#identify"/></svg></span>
    <span class="w-[33px] flex justify-center"><svg class="w-[26px] h-[26px]"><use href="#abacus"/></svg></span>
    <span class="w-[33px] flex justify-center"><svg class="w-[26px] h-[26px]"><use href="#gear"/></svg></span>
    <span class="w-[33px] flex justify-center"><svg class="w-[26px] h-[26px]"><use href="#sigma"/></svg></span>
    <span class="w-[33px] flex justify-center"><svg class="w-[26px] h-[26px]"><use href="#table"/></svg></span>
    <span class="w-[18px] flex justify-center"><span class="w-0 h-0 border-x-[5px] border-x-transparent border-t-[6px] border-t-[#555]"></span></span>
    <span class="w-[33px] flex justify-center"><svg class="w-[26px] h-[26px]"><use href="#ruler"/></svg></span>
    <span class="w-[18px] flex justify-center"><span class="w-0 h-0 border-x-[5px] border-x-transparent border-t-[6px] border-t-[#555]"></span></span>
    <span class="w-[33px] flex justify-center"><svg class="w-[26px] h-[26px]"><use href="#tip"/></svg></span>
    <span class="w-[33px] flex justify-center"><svg class="w-[26px] h-[26px]"><use href="#action"/></svg></span>
    <span class="w-[18px] flex justify-center"><span class="w-0 h-0 border-x-[5px] border-x-transparent border-t-[6px] border-t-[#aaa]"></span></span>
  </div>
  <!-- toolbar 2 -->
  <div class="h-[45px] flex items-center pl-[9px] pt-[1px] bg-[#f6f6f6] border-b-[3px] border-[#bcbcbc]">
    <span class="h-[24px] w-[3px] mr-[6.500px] border-l-2 border-dotted border-[#c9c9c9]"></span>
    <span class="w-[33px] flex justify-center"><svg class="w-[26px] h-[26px]"><use href="#dsm"/></svg></span>
    <span class="w-[33px] flex justify-center"><svg class="w-[26px] h-[26px]"><use href="#gpkg"/></svg></span>
    <span class="w-[33px] flex justify-center"><svg class="w-[26px] h-[26px]"><use href="#newvec"/></svg></span>
    <span class="w-[33px] flex justify-center"><svg class="w-[26px] h-[26px]"><use href="#featherb"/></svg></span>
    <span class="w-[33px] flex justify-center"><svg class="w-[26px] h-[26px]"><use href="#chip"/></svg></span>
    <span class="w-[33px] flex justify-center"><svg class="w-[26px] h-[26px]"><use href="#meshb"/></svg></span>
    <span class="w-[10px] flex justify-end"><span class="h-[28px] w-px bg-[#d5d5d5]"></span></span>
    <span class="w-[33px] flex justify-center"><svg class="w-[26px] h-[26px]"><use href="#vedit"/></svg></span>
    <span class="w-[10px] flex justify-center"><span class="h-[28px] w-px bg-[#d5d5d5]"></span></span>
    <span class="w-[24px] flex justify-center"><span class="h-[24px] w-[2px] border-l-2 border-dotted border-[#c9c9c9]"></span></span>
    <span class="w-[33px] flex justify-center opacity-40"><svg class="w-[26px] h-[26px]"><use href="#pencils"/></svg></span>
    <span class="w-[33px] flex justify-center"><svg class="w-[26px] h-[26px]"><use href="#pencil"/></svg></span>
    <span class="w-[33px] flex justify-center opacity-50"><svg class="w-[26px] h-[26px]"><use href="#savee"/></svg></span>
    <span class="w-[36px] flex justify-center opacity-60"><svg class="w-[26px] h-[26px]"><use href="#blobb"/></svg></span>
    <span class="w-[26px] flex justify-center opacity-50"><svg class="w-[26px] h-[26px]"><use href="#vtools"/></svg></span>
    <span class="w-[18px] flex justify-center"><span class="w-0 h-0 border-x-[5px] border-x-transparent border-t-[6px] border-t-[#999]"></span></span>
    <span class="w-[33px] flex justify-center opacity-60"><svg class="w-[26px] h-[26px]"><use href="#tedit"/></svg></span>
    <span class="w-[33px] flex justify-center opacity-60"><svg class="w-[26px] h-[26px]"><use href="#trash"/></svg></span>
    <span class="w-[33px] flex justify-center opacity-70"><svg class="w-[26px] h-[26px]"><use href="#cut"/></svg></span>
    <span class="w-[33px] flex justify-center opacity-70"><svg class="w-[26px] h-[26px]"><use href="#copy"/></svg></span>
    <span class="w-[33px] flex justify-center opacity-70"><svg class="w-[26px] h-[26px]"><use href="#paste"/></svg></span>
    <span class="w-[33px] flex justify-center opacity-70"><svg class="w-[26px] h-[26px]"><use href="#undo"/></svg></span>
    <span class="w-[33px] flex justify-center opacity-70"><svg class="w-[26px] h-[26px]"><use href="#redo"/></svg></span>
    <span class="w-[27px] flex justify-center"><span class="h-[24px] w-[2px] border-l-2 border-dotted border-[#c9c9c9]"></span></span>
    <span class="w-[33px] flex justify-center"><svg class="w-[26px] h-[26px]" viewBox="0 0 26 26"><use href="#tag"/><text x="7" y="16" font-size="9" font-family="Liberation Serif" fill="#444">abc</text></svg></span>
    <span class="w-[33px] flex justify-center"><svg class="w-[26px] h-[26px]"><use href="#diagram"/></svg></span>
    <span class="w-[10px] flex justify-center"><span class="h-[28px] w-px bg-[#d5d5d5]"></span></span>
    <span class="w-[33px] flex justify-center"><svg class="w-[26px] h-[26px]" viewBox="0 0 26 26"><use href="#tagpin"/><text x="6" y="13" font-size="9" font-family="Liberation Serif" fill="#444">ab</text></svg></span>
    <span class="w-[33px] flex justify-center"><svg class="w-[26px] h-[26px]" viewBox="0 0 26 26"><use href="#tagred"/><text x="7" y="16" font-size="9" font-family="Liberation Serif" fill="#e62b2b">abc</text></svg></span>
    <span class="w-[10px] flex justify-center"><span class="h-[28px] w-px bg-[#d5d5d5]"></span></span>
    <span class="w-[33px] flex justify-center"><svg class="w-[26px] h-[26px]" viewBox="0 0 26 26"><use href="#taggray"/><text x="7" y="12" font-size="9" font-family="Liberation Serif" fill="#aaa">abc</text></svg></span>
    <span class="w-[33px] flex justify-center"><svg class="w-[26px] h-[26px]" viewBox="0 0 26 26"><use href="#taggray"/><text x="7" y="12" font-size="9" font-family="Liberation Serif" fill="#aaa">abc</text></svg></span>
    <span class="w-[33px] flex justify-center"><svg class="w-[26px] h-[26px]" viewBox="0 0 26 26"><use href="#taggray"/><text x="7" y="12" font-size="9" font-family="Liberation Serif" fill="#aaa">abc</text></svg></span>
    <span class="w-[33px] flex justify-center"><svg class="w-[26px] h-[26px]" viewBox="0 0 26 26"><use href="#taggray"/><text x="7" y="12" font-size="9" font-family="Liberation Serif" fill="#aaa">abc</text></svg></span>
    <span class="w-[33px] flex justify-center"><svg class="w-[26px] h-[26px]" viewBox="0 0 26 26"><use href="#taggray"/><text x="7" y="12" font-size="9" font-family="Liberation Serif" fill="#aaa">abc</text></svg></span>
    <span class="w-[25px] flex justify-center"><span class="h-[24px] w-[2px] border-l-2 border-dotted border-[#c9c9c9]"></span></span>
    <span class="w-[33px] flex justify-center"><svg class="w-[26px] h-[26px]"><use href="#globebin"/></svg></span>
    <span class="w-[23px] flex justify-center"><span class="h-[24px] w-[2px] border-l-2 border-dotted border-[#c9c9c9]"></span></span>
    <span class="w-[33px] flex justify-center"><svg class="w-[26px] h-[26px]"><use href="#python"/></svg></span>
    <span class="w-[23px] flex justify-center"><span class="h-[24px] w-[2px] border-l-2 border-dotted border-[#c9c9c9]"></span></span>
    <span class="w-[33px] flex justify-center"><svg class="w-[26px] h-[26px]" viewBox="0 0 26 26"><use href="#help"/><text x="11" y="18" font-size="15" font-family="Liberation Serif" fill="#fff">?</text></svg></span>
    <span class="w-[23px] flex justify-center"><span class="h-[24px] w-[2px] border-l-2 border-dotted border-[#c9c9c9]"></span></span>
  </div>

  <!-- main area -->
  <div class="flex-1 flex min-h-0 bg-[#eeeeee]">
    <div class="w-[571px] flex flex-col border-r border-[#b5b5b5] text-[18.500px] leading-none text-[#111]">
      <!-- browser panel -->
      <div class="h-[55px] relative px-[4px]">
        <div class="h-[20px] flex items-center">Browser</div>
        <div class="flex items-center gap-[7px] mt-[7px] pl-[6px]">
          <svg class="w-[18px] h-[18px]"><use href="#add"/></svg>
          <svg class="w-[18px] h-[18px]"><use href="#refresh"/></svg>
          <svg class="w-[18px] h-[18px]"><use href="#funnel"/></svg>
          <svg class="w-[18px] h-[18px]"><use href="#collapse"/></svg>
          <svg class="w-[18px] h-[18px]"><use href="#info"/></svg>
        </div>
        <div class="absolute right-[2px] top-[2px] flex gap-[3px]">
          <span class="w-[11px] h-[11px] border border-[#555] rounded-[2px]"><span class="block w-[5px] h-[5px] border border-[#555] mt-[1px] ml-[2px]"></span></span>
          <span class="w-[11px] h-[11px] bg-[#555] border border-[#555] rounded-[2px] flex"><svg class="w-[9px] h-[9px]" viewBox="0 0 9 9" stroke="#fff"><path d="M2 2l5 5M7 2L2 7"/></svg></span>
        </div>
      </div>
      <div class="h-[377px] overflow-hidden bg-white border-y border-[#bdbdbd] box-border">
        <div class="h-[26px] flex items-center pl-[23px]"><svg class="w-[26px] h-[26px] mr-[4px]"><use href="#gpkg"/></svg>GeoPackage</div>
        <div class="h-[26px] flex items-center pl-[23px]"><svg class="w-[26px] h-[26px] mr-[4px]"><use href="#feather"/></svg>SpatiaLite</div>
        <div class="h-[26px] flex items-center pl-[23px]"><svg class="w-[26px] h-[26px] mr-[4px]"><use href="#pg"/></svg>PostGIS</div>
        <div class="h-[26px] flex items-center pl-[23px]"><svg class="w-[26px] h-[26px] mr-[4px]"><use href="#hana"/></svg>SAP HANA</div>
        <div class="h-[26px] flex items-center pl-[7px]"><span class="w-0 h-0 mr-[10px] border-y-[5.500px] border-y-transparent border-l-[6px] border-l-[#555]"></span><svg class="w-[26px] h-[26px] mr-[4px]"><use href="#mssql"/></svg>MSSQL</div>
        <div class="h-[26px] flex items-center pl-[6px]"><span class="w-0 h-0 mr-[7px] border-x-[5.500px] border-x-transparent border-t-[6px] border-t-[#555]"></span><svg class="w-[26px] h-[26px] mr-[4px]"><use href="#oracle"/></svg>Oracle</div>
        <div class="h-[25px] flex items-center ml-[7px] w-[270px] bg-[#f0f0f0] pl-[17px]"><span class="w-0 h-0 mr-[11px] border-x-[5.500px] border-x-transparent border-t-[6px] border-t-[#555]"></span><svg class="w-[18px] h-[18px] mr-[9px]"><use href="#conn"/></svg>localhost</div>
        <div class="h-[24px] flex items-center pl-[45px]"><span class="w-0 h-0 mr-[11px] border-y-[5.500px] border-y-transparent border-l-[6px] border-l-[#555]"></span>MDSYS</div>
        <div class="h-[24px] flex items-center pl-[45px]"><span class="w-0 h-0 mr-[11px] border-y-[5.500px] border-y-transparent border-l-[6px] border-l-[#555]"></span>SYSTEM</div>
        <div class="h-[26px] flex items-center pl-[23px]"><svg class="w-[26px] h-[26px] mr-[4px]"><use href="#wms"/></svg>WMS/WMTS</div>
        <div class="h-[26px] flex items-center pl-[23px]"><svg class="w-[26px] h-[26px] mr-[4px]"><use href="#vtiles"/></svg>Vector Tiles</div>
        <div class="h-[26px] flex items-center pl-[7px]"><span class="w-0 h-0 mr-[10px] border-y-[5.500px] border-y-transparent border-l-[6px] border-l-[#555]"></span><svg class="w-[26px] h-[26px] mr-[4px]"><use href="#xyz"/></svg>XYZ Tiles</div>
        <div class="h-[26px] flex items-center pl-[23px]"><svg class="w-[26px] h-[26px] mr-[4px]"><use href="#wcs"/></svg>WCS</div>
        <div class="h-[26px] flex items-center pl-[23px]"><svg class="w-[26px] h-[26px] mr-[4px]"><use href="#wfs"/></svg>WFS / OGC API - Features</div>
        <div class="h-[26px] flex items-center pl-[23px]"><svg class="w-[26px] h-[26px] mr-[4px]"><use href="#wfs"/></svg>ArcGIS REST Servers</div>
      </div>
      <!-- layers panel -->
      <div class="h-[65px] px-[4px] pt-[12px]">
        <div class="h-[20px] flex items-center">Layers</div>
        <div class="flex items-center gap-[7px] mt-[6px] pl-[5px]">
          <svg class="w-[18px] h-[18px]"><use href="#brush"/></svg>
          <svg class="w-[18px] h-[18px]"><use href="#addgroup"/></svg>
          <svg class="w-[18px] h-[18px]"><use href="#eye"/></svg>
          <svg class="w-[18px] h-[18px]"><use href="#filtr"/></svg>
          <svg class="w-[18px] h-[18px]"><use href="#eps"/></svg>
          <span class="w-0 h-0 border-x-[5px] border-x-transparent border-t-[6px] border-t-[#aaa]"></span>
          <svg class="w-[18px] h-[18px]"><use href="#expand"/></svg>
          <svg class="w-[18px] h-[18px]"><use href="#collapse"/></svg>
          <svg class="w-[18px] h-[18px]"><use href="#removeg"/></svg>
        </div>
      </div>
      <div class="flex-1 bg-white border-t border-[#bdbdbd] pt-[3px] pl-[34px]">
        <div class="h-[21px] flex items-center">
          <span class="w-[21px] h-[21px] border border-[#aaa] flex items-center justify-center"><svg class="w-[15px] h-[15px]" viewBox="0 0 15 15" fill="none" stroke="#000" stroke-width="2.200"><path d="M2 8l4 5 7-12"/></svg></span>
          <span class="ml-[6px] w-[21px] h-[21px] bg-[#e87148] border border-[#555]"></span>
          <b class="ml-[6px] underline font-bold text-black text-[19.500px] tracking-[0.3px]">STATES_SHP2SDO</b>
        </div>
      </div>
    </div>
    <div class="w-[8px] bg-[#eeeeee]"></div>
    <!-- map canvas -->
    <div class="flex-1 bg-white border-l border-[#b5b5b5] border-t relative">
      <div class="absolute right-0 top-[327px] w-[21px] h-[64px] bg-[#444] rounded-l-[3px] flex flex-col items-center justify-center gap-[1px]">
        <span class="w-[9px] h-[20px] bg-[repeating-linear-gradient(#777_0,#777_1px,transparent_1px,transparent_2px)]"></span>
        <span class="w-[9px] h-[2px] bg-[#f2a33a] my-[1px]"></span>
        <span class="w-[9px] h-[20px] bg-[repeating-linear-gradient(#777_0,#777_1px,transparent_1px,transparent_2px)]"></span>
      </div>
    </div>
  </div>

  <!-- status bar -->
  <div class="h-[37px] flex items-center bg-[#eeeeee] border-t border-[#b5b5b5] font-['Liberation_Mono',monospace] text-[13.330px] text-[#222]">
    <div class="ml-[4px] w-[364px] h-[29px] bg-white border border-[#b8b8b8] rounded-[2px] flex items-center pl-[11px] pt-[1px] text-[15px] text-[#a59f8f]">
      <svg class="w-[19px] h-[19px] mr-[8px]" viewBox="0 0 19 19" fill="none" stroke="#777" stroke-width="2"><circle cx="8" cy="8" r="6"/><path d="M12.500 12.500L18 18"/></svg>Type to locate (Ctrl+K)
    </div>
    <span class="ml-[703px] pt-[2px]">Coordinate</span>
    <div class="ml-[2px] w-[120px] h-[29px] bg-white border border-[#b8b8b8] rounded-[2px] flex items-center pl-[6px]">-124.74,45.98</div>
    <svg class="ml-[6px] w-[22px] h-[26px]" viewBox="0 0 22 26"><path d="M4 3l5-2 10 18-5 5-6-5z" fill="#fff" stroke="#111" stroke-width="2"/><path d="M6 4l5 6M9 12l6 6" stroke="#111" stroke-width="3"/></svg>
    <span class="ml-[14px] pt-[2px]">Scale</span>
    <div class="ml-[3px] w-[117px] h-[29px] bg-white border border-[#b8b8b8] rounded-[2px] flex items-center pl-[4px] relative">1:14126802<span class="absolute right-0 top-0 w-[30px] h-full bg-[#eee] flex items-center justify-center"><span class="w-0 h-0 border-x-[5px] border-x-transparent border-t-[7px] border-t-[#555]"></span></span></div>
    <svg class="ml-[12px] w-[20px] h-[28px]" viewBox="0 0 20 28"><path d="M5 13V7a5 5 0 0 1 10 0v6" fill="none" stroke="#888" stroke-width="2"/><rect x="2" y="13" width="16" height="14" rx="1" fill="#6d6d6d"/></svg>
    <span class="ml-[9px] pt-[2px]">Magnifier</span>
    <div class="ml-[4px] w-[117px] h-[29px] bg-white border border-[#b8b8b8] rounded-[2px] flex items-center pl-[4px] relative">100%<span class="absolute right-0 top-0 w-[22px] h-full bg-[#f2f2f2] flex flex-col items-center justify-center gap-[3px]"><span class="w-0 h-0 border-x-[5px] border-x-transparent border-b-[7px] border-b-[#555]"></span><span class="w-0 h-0 border-x-[5px] border-x-transparent border-t-[7px] border-t-[#555]"></span></span></div>
    <span class="ml-[8px] pt-[2px]">Rotation</span>
    <div class="ml-[10px] w-[109px] h-[29px] bg-white border border-[#b8b8b8] rounded-[2px] flex items-center pl-[4px] relative">0.0 °<span class="absolute right-0 top-0 w-[22px] h-full bg-[#f2f2f2] flex flex-col items-center justify-center gap-[3px]"><span class="w-0 h-0 border-x-[5px] border-x-transparent border-b-[7px] border-b-[#555]"></span><span class="w-0 h-0 border-x-[5px] border-x-transparent border-t-[7px] border-t-[#555]"></span></span></div>
    <span class="ml-[6px] w-[21px] h-[21px] bg-white border border-[#aaa] flex items-center justify-center"><svg class="w-[15px] h-[15px]" viewBox="0 0 15 15" fill="none" stroke="#000" stroke-width="2.200"><path d="M2 8l4 5 7-12"/></svg></span>
    <span class="ml-[7px] pt-[2px]">Render</span>
    <svg class="ml-[18px] w-[21px] h-[21px]" viewBox="0 0 26 26"><use href="#wcs"/></svg>
    <span class="ml-[3px] pt-[2px]">EPSG:4326</span>
    <svg class="ml-[32px] w-[25px] h-[28px]" viewBox="0 0 25 28"><path d="M12.500 1a11.500 11.500 0 0 1 5 21.800L23 27l-8-3a11.500 11.500 0 1 1-2.500-23z" fill="#555"/><circle cx="7.500" cy="12.500" r="1.600" fill="#fff"/><circle cx="12.500" cy="12.500" r="1.600" fill="#fff"/><circle cx="17.500" cy="12.500" r="1.600" fill="#fff"/></svg>
  </div>

  <!-- map: outline and state borders, over the canvas -->
  <svg class="absolute left-[581px] top-[151px] w-[1578px] h-[1192px]" viewBox="581 151 1578 1192">
    <path id="us" fill="#e87148" stroke="#2e2e2e" stroke-width="1.300" stroke-linejoin="round"/>
    <path id="li" fill="#e87148" stroke="#2e2e2e" stroke-width="1.200"/>
    <path id="lines" fill="none" stroke="#2e2e2e" stroke-width="1.300" stroke-linejoin="round"/>
    <path id="water" fill="#fff" stroke="#2e2e2e" stroke-width="1"/>
  </svg>

  <!-- red highlight painted on the screenshot -->
  <div class="absolute left-0 top-[332px] w-[362px] h-[104px] border-[7px] border-[#fb3a3a]"></div>

  <!-- dialog -->
  <div class="absolute left-[410px] top-[204px] w-[454px] h-[843px] flex flex-col bg-[#eeeeee] border border-[#0078d7] shadow-[0_0_16px_rgba(0,0,0,0.35)] font-['Liberation_Mono',monospace] text-[15px] text-[#2e2e2e]">
    <div class="h-[45px] pb-[3px] flex items-center bg-[#0078d7] text-white font-['Noto_Sans',sans-serif] text-[18.500px]">
      <svg class="ml-[11px] w-[26px] h-[26px]"><use href="#qlogo"/></svg>
      <span class="ml-[2px]">Create a New Oracle Connection</span>
      <svg class="ml-auto mr-[17px] mt-[3px] w-[17px] h-[17px]" viewBox="0 0 17 17" stroke="#fff" stroke-width="1.200"><path d="M1 1l15 15M16 1L1 16"/></svg>
    </div>
    <div class="h-[33px] flex items-center pl-[9px] pt-[6px]">Connection Information</div>
    <div class="mx-[10px] h-[719px] border border-[#d9d9d9] pl-[12px] pr-[13px] pt-[9px] flex flex-col">
      <div class="flex flex-col gap-[6px]">
        <div class="flex items-center h-[30px]"><span class="w-[142px] pt-[3px]">Name</span><span class="flex-1 h-[30px] bg-white border border-[#b3b3b3] rounded-[2px] flex items-center pl-[2px] pt-[2px]">localhost</span></div>
        <div class="flex items-center h-[30px]"><span class="w-[142px] pt-[3px]">Database</span><span class="flex-1 h-[30px] bg-white border border-[#b3b3b3] rounded-[2px] flex items-center pl-[2px] pt-[2px]">XEPDB1</span></div>
        <div class="flex items-center h-[30px]"><span class="w-[142px] pt-[3px]">Host</span><span class="flex-1 h-[30px] bg-white border border-[#b3b3b3] rounded-[2px] flex items-center pl-[2px] pt-[2px]">localhost</span></div>
        <div class="flex items-center h-[30px]"><span class="w-[142px] pt-[3px]">Port</span><span class="flex-1 h-[30px] bg-white border border-[#b3b3b3] rounded-[2px] flex items-center pl-[2px] pt-[2px]">1521</span></div>
        <div class="flex items-center h-[30px]"><span class="w-[142px] pt-[3px]">Options</span><span class="flex-1 h-[30px] bg-white border border-[#b3b3b3] rounded-[2px]"></span></div>
        <div class="flex items-center h-[30px]"><span class="w-[142px] pt-[3px]">Workspace</span><span class="flex-1 h-[30px] bg-white border border-[#b3b3b3] rounded-[2px]"></span></div>
        <div class="flex items-center h-[30px]"><span class="w-[142px] pt-[3px]">Schema</span><span class="flex-1 h-[30px] bg-white border border-[#b3b3b3] rounded-[2px]"></span></div>
      </div>
      <div class="h-[31px] flex items-center mt-[2px] pt-[2px]">Authentication</div>
      <!-- auth group -->
      <div class="h-[233px] mt-[-1px] border border-[#d9d9d9] bg-[#ebebeb] px-[7px] pt-[4px]">
        <div class="flex h-[34px] items-end relative z-10">
          <span class="w-[163px] h-[35px] pt-[3px] bg-[#fdfdfd] border border-[#b3b3b3] border-b-0 rounded-t-[3px] flex items-center justify-center">Configurations</span>
          <span class="w-[80px] h-[32px] pt-[2px] bg-[#ececec] border border-[#c6c6c6] border-b-0 rounded-t-[2px] flex items-center justify-center">Basic</span>
        </div>
        <div class="h-[184px] bg-[#fdfdfd] border border-[#b3b3b3] pl-[7px] pt-[6px]">
          <p class="leading-[21px]">Choose or create an authentication<br>configuration</p>
          <div class="flex items-center h-[30px] mt-[4px]">
            <span class="w-[190px] h-[26px] bg-[#f1f1f1] border border-[#b3b3b3] rounded-[2px] flex items-center pl-[4px] relative">No Authentication<span class="absolute right-[11px] top-[9px] w-0 h-0 border-x-[6px] border-x-transparent border-t-[6px] border-t-[#555]"></span></span>
            <span class="ml-[10px] w-[32px] h-[31px] bg-[#f0f0f0] border border-[#cfcfcf] rounded-[2px] flex items-center justify-center"><svg class="w-[22px] h-[24px] opacity-50" viewBox="0 0 26 26"><path d="M5 25l1-7L17 1l4 4-11 16z" fill="#ddd" stroke="#aaa"/></svg></span>
            <span class="ml-[9px] w-[32px] h-[31px] bg-[#f0f0f0] border border-[#cfcfcf] rounded-[2px] flex items-center justify-center"><span class="w-[20px] h-[8px] bg-[#eee] border-[2px] border-[#dcd2d2]"></span></span>
            <span class="ml-[9px] w-[32px] h-[31px] bg-[#f0f0f0] border border-[#c0c0c0] rounded-[2px] flex items-center justify-center"><svg class="w-[22px] h-[22px]" viewBox="0 0 22 22"><path d="M8 1h6v7h7v6h-7v7H8v-7H1V8h7z" fill="#c8dcc8" stroke="#4f8a57" stroke-width="1.600"/><path d="M11 4v14M4 11h14" stroke="#5c9a63" stroke-width="2"/></svg></span>
          </div>
          <p class="leading-[21.500px] mt-[4px]">Configurations store encrypted<br>credentials in the QGIS authentication<br>database.</p>
        </div>
      </div>
      <!-- checks -->
      <div class="mt-[5px] flex items-center h-[29px]">
        <span class="w-[21px] h-[21px] bg-white border border-[#c8c8c8]"></span><span class="ml-[8px]">Only look in metadata table</span>
        <span class="ml-auto w-[122px] h-[29px] pt-[1px] bg-[#f1f1f1] border border-[#b3b3b3] rounded-[2px] flex items-center justify-center"><span><u>T</u>est Connect</span></span>
      </div>
      <div class="mt-[8px] flex items-center h-[21px]"><span class="w-[21px] h-[21px] bg-white border border-[#c8c8c8]"></span><span class="ml-[8px] pt-[1px]">Only look for user's tables</span></div>
      <div class="mt-[9px] flex items-center h-[21px]"><span class="w-[21px] h-[21px] bg-white border border-[#c8c8c8]"></span><span class="ml-[8px] pt-[2px]">Also list tables with no geometry</span></div>
      <div class="mt-[9px] flex items-center h-[21px]"><span class="w-[21px] h-[21px] bg-white border border-[#c8c8c8]"></span><span class="ml-[8px] pt-[2px]">Use estimated table metadata</span></div>
      <div class="mt-[9px] flex items-center h-[21px]"><span class="w-[21px] h-[21px] bg-white border border-[#c8c8c8]"></span><span class="ml-[8px] pt-[2px]">Only existing geometry types</span></div>
      <div class="mt-[9px] flex items-center h-[21px]"><span class="w-[21px] h-[21px] bg-white border border-[#c8c8c8]"></span><span class="ml-[8px] pt-[2px]">Include additional geometry attributes</span></div>
    </div>
    <div class="flex justify-end gap-[9px] mt-[7px] mr-[10px]">
      <span class="w-[80px] h-[29px] pt-[2px] bg-[#e8f0f8] border border-[#0078d7] rounded-[2px] flex items-center justify-center">OK</span>
      <span class="w-[80px] h-[29px] pt-[2px] bg-[#f1f1f1] border border-[#b3b3b3] rounded-[2px] flex items-center justify-center">Cancel</span>
      <span class="w-[80px] h-[29px] pt-[2px] bg-[#f1f1f1] border border-[#b3b3b3] rounded-[2px] flex items-center justify-center">Help</span>
    </div>
  </div>
</div>

<script>
// outlines traced from the reference; a = west crop, b = east crop
const a = s => s.trim().split(/\s+/).map(p => { const [x, y] = p.split(",").map(Number); return [860 + x * 700 / 1568, 420 + y * 680 / 1568]; });
const b = s => s.trim().split(/\s+/).map(p => { const [x, y] = p.split(",").map(Number); return [1400 + x * 760 / 1568, 420 + y * 680 / 1568]; });
const d = (pts, close) => "M" + pts.map(p => p[0].toFixed(1) + " " + p[1].toFixed(1)).join("L") + (close ? "Z" : "");

// fixed seed, so shorelines and rivers come out the same on each load
let seed = 7;
const rnd = () => { seed = (seed * 16807) % 2147483647; return seed / 2147483647 - 0.5; };
const rough = (pts, amp = 2.4, step = 6, maxLen = 75) => {
  const out = [pts[0]];
  for (let i = 1; i < pts.length; i++) {
    const [x0, y0] = pts[i - 1], [x1, y1] = pts[i];
    const len = Math.hypot(x1 - x0, y1 - y0);
    if (len < maxLen) {
      const n = Math.floor(len / step);
      for (let k = 1; k < n; k++) out.push([x0 + (x1 - x0) * k / n + rnd() * amp, y0 + (y1 - y0) * k / n + rnd() * amp]);
    }
    out.push(pts[i]);
  }
  return out;
};

const coast = [
  ...a("-400,56 1158,56 1160,33 1178,36 1187,68 1215,72 1240,80 1270,76 1300,85 1320,98 1345,96 1370,110 1410,102 1440,112 1485,117"),
  ...b("180,145 118,193 185,180 190,198 215,205 270,180 305,175 300,165 325,150 352,148 312,170 315,185 345,182 370,205 420,205 460,192 498,190 503,208 530,208 550,232 578,232 578,240 510,238 470,232 410,250 385,258 365,290 335,322 360,310 352,360 345,400 350,460 370,497 410,490 432,430 415,370 430,315 465,290 470,305 495,270 500,250 540,258 588,285 590,325 557,365 565,378 610,352 625,360 635,425 610,440 585,490 630,510 680,500 740,475 780,460 825,430 818,400 850,393 900,400 965,385 963,350 1000,320 1045,296 1220,295 1230,280 1255,280 1262,265 1300,210 1345,150 1395,155 1422,172 1425,250 1445,265 1465,310 1400,330 1370,325 1345,350 1310,365 1262,410 1270,425 1250,455 1275,490 1300,490 1290,470 1305,485 1300,497 1240,505 1225,512 1110,530 1095,535 1090,545 1075,570 1085,590 1040,660 1010,630 1030,670 1033,690 985,765 990,720 975,690 985,650 978,622 955,640 950,680 925,695 960,720 935,740 935,765 965,785 985,790 1010,860 1008,880 960,895 965,905 880,960 845,965 810,1010 770,1035 720,1070 690,1130 685,1150 720,1260 762,1370 762,1420 750,1480 720,1490 700,1470 670,1430 650,1390 620,1330 625,1270 590,1230 540,1190 480,1215 440,1175 360,1170 335,1180 250,1185 265,1225 280,1250 220,1245 160,1240 110,1220 50,1210 20,1215"),
  ...a("1160,1255 1100,1285 1075,1300 1035,1330 1025,1360 1030,1390 1040,1435 1030,1445 975,1430 930,1412 905,1370 905,1345 860,1300 835,1250 795,1210 740,1205 715,1215 690,1258 640,1235 605,1205 585,1155 540,1130 500,1095 490,1090 397,1090 397,1116 230,1116 10,1048 -400,920")
];
document.getElementById("us").setAttribute("d", d(rough(coast), true));
document.getElementById("li").setAttribute("d", d(b("1090,560 1105,545 1200,530 1160,552"), true) + d(b("272,125 310,105 295,118"), true) + d(b("1262,515 1275,510 1275,517"), true) + d(b("1295,518 1305,515 1305,521"), true));

// a leading ~ marks a border that follows a river
const west = [
  "638,56 638,535", "638,240 1075,240",
  "~1038,56 1045,110 1060,140 1065,200 1075,240 1060,265 1082,280", "1082,280 1082,385",
  "638,415 960,417", "~960,417 990,430 1040,425 1075,440",
  "1075,385 1385,385",
  "~1075,385 1080,400 1073,435 1100,480 1125,560 1145,598 1170,605 1160,625 1188,648", "1188,648 1188,775",
  "1125,560 1360,560 1378,572",
  "756,537 756,597 1145,597", "232,537 756,537", "232,296 638,296", "232,296 232,537",
  "~10,190 40,198 30,260 65,258 90,295 125,330 205,320 232,330",
  "10,477 232,477", "57,477 57,825", "~57,825 20,830 20,885 50,938 20,1000 10,1048",
  "57,777 1188,777", "348,537 348,1116", "756,537 756,777",
  "700,777 698,1077 490,1078",
  "700,807 876,807 876,920", "~876,920 925,945 1000,960 1040,965 1090,970 1155,960 1198,978", "1198,978 1222,983 1222,1078", "~1222,1078 1250,1130 1240,1205",
  "1188,777 1190,810 1200,870 1198,978", "1190,807 1455,807 1437,837 1475,837", "1222,1015 1390,1015",
  "~1510,770 1475,837 1445,900 1395,970 1395,1050 1365,1135", "1365,1135 1475,1135", "~1475,1135 1480,1180",
  "~1378,572 1375,610 1420,660 1450,665 1437,705 1490,740 1510,770",
  "~1385,385 1395,430 1450,475 1395,515 1378,572",
  "1325,196 1325,235", "~1325,235 1292,260 1298,315 1385,360 1385,385"
];
const east = [
  "198,447 347,447", "362,497 362,640", "~362,640 335,725",
  "~335,725 390,718 450,710 510,650 570,680 610,675 625,690 665,650 725,605 735,560", "735,560 739,478",
  "739,478 739,612 995,612", "370,490 510,490 585,490", "510,490 508,650",
  "~625,690 660,745 685,765 750,745 785,685 810,690 855,630 885,645",
  "795,612 795,643", "~795,643 860,617 885,640 910,655 915,695 925,695", "995,612 998,690 1033,690",
  "~660,745 570,800", "270,805 335,797 980,802", "~678,802 620,840 540,880 535,897", "222,897 590,897",
  "~275,770 240,850", "330,897 312,1080 316,1175", "465,897 500,1060 492,1135", "360,1135 498,1135",
  "498,1135 503,1155 650,1162 685,1150", "~590,910 640,970 690,1020 710,1075",
  "590,910 630,885 710,885 725,907 785,908 845,965",
  "780,460 780,475 1015,477", "~1015,477 1035,510", "1035,510 1095,535", "~1050,515 1025,545 1048,590 1005,620",
  "1125,296 1120,370 1130,432 1118,475 1110,530", "~1220,295 1170,430", "1245,280 1255,410",
  "1130,432 1262,435", "1118,475 1230,477", "1207,477 1207,515", "1230,477 1230,505"
];
const lines = (list, crop) => list.map(s => s[0] === "~" ? d(rough(crop(s.slice(1)), 2)) : d(crop(s))).join("");
document.getElementById("lines").setAttribute("d", lines(west, a) + lines(east, b));
document.getElementById("water").setAttribute("d", d(b("950,888 990,865 998,878 960,892"), true));
</script>
</body>
</html>
